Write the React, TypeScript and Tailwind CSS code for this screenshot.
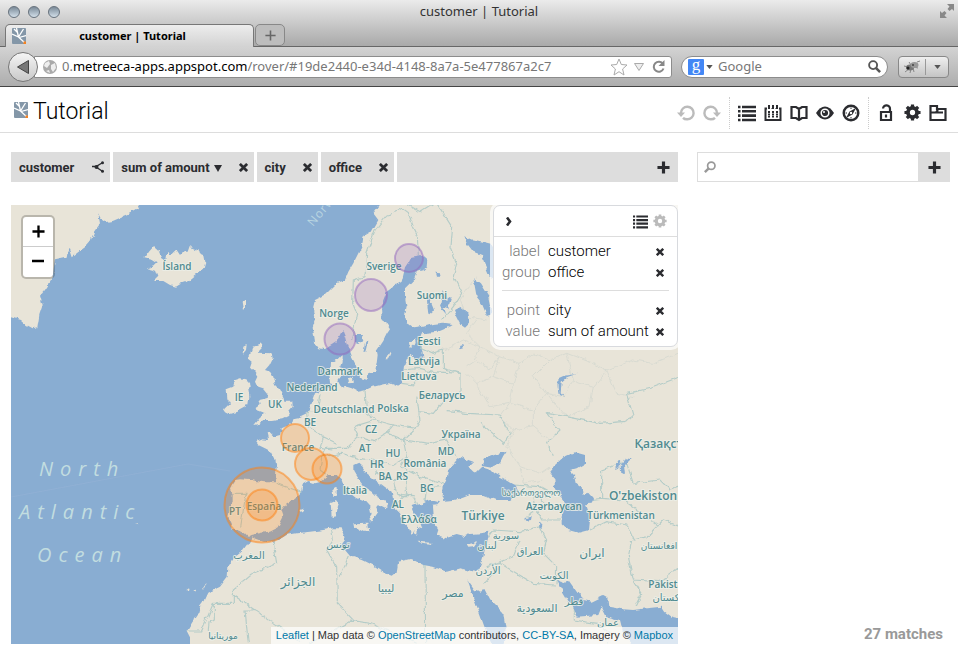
import React from "react";

type IconProps = { className?: string };

const Leaf = ({ className }: IconProps) => (
  <svg viewBox="0 0 14 16" className={className} aria-hidden="true">
    <rect width="14" height="16" rx="1" fill="#8497a8" />
    <path d="M0 6 L6.500 9 L14 16 M6.500 9 L4.500 0 M6.500 9 L11.500 1 M7 9.500 L14 7.500 M5.500 4.500 L2 1" fill="none" stroke="#fff" strokeWidth="1.300" />
    <rect x="11.500" y="13.500" width="2.500" height="2.500" fill="#f58220" />
  </svg>
);

const Undo = ({ className }: IconProps) => (
  <svg viewBox="0 0 18 18" className={className} fill="none" stroke="currentColor" strokeWidth="2.400" aria-hidden="true">
    <path d="M4 10 V9 A6.300 6.300 0 1 1 10 15.300 Q7.500 15.300 6 13.800" />
    <path d="M0 8.500 H8 L4 13 Z" fill="currentColor" stroke="none" />
  </svg>
);

const ListIcon = ({ className }: IconProps) => (
  <svg viewBox="0 0 18 18" className={className} stroke="currentColor" strokeWidth="2.600" aria-hidden="true">
    <path d="M0 3 H2.500 M4 3 H18 M0 7.300 H2.500 M4 7.300 H18 M0 11.600 H2.500 M4 11.600 H18 M0 16 H2.500 M4 16 H18" />
  </svg>
);

const CalendarIcon = ({ className }: IconProps) => (
  <svg viewBox="0 0 18 18" className={className} fill="none" stroke="currentColor" strokeWidth="2" aria-hidden="true">
    <path d="M1.500 3.500 V16 H16.500 V3.500 M5 1 V5 M9 1 V5 M13 1 V5 M0.500 4.500 H3 M15 4.500 H17.500" />
    <path d="M7 4.500 H7.500 M11 4.500 H11.500" strokeWidth="1" />
    <path d="M4 8 H14 M4 12.500 H14" strokeDasharray="2 2" />
    <path d="M4 10.300 H14" strokeDasharray="2 2" strokeWidth="1.400" />
  </svg>
);

const BookIcon = ({ className }: IconProps) => (
  <svg viewBox="0 0 18 18" className={className} fill="none" stroke="currentColor" strokeWidth="2.200" aria-hidden="true">
    <path d="M9 5 L6 3 H1.500 V14 H6 L9 16 L12 14 H16.500 V3 H12 Z M9 5 V16" />
  </svg>
);

const EyeIcon = ({ className }: IconProps) => (
  <svg viewBox="0 0 18 16" className={className} aria-hidden="true">
    <path d="M0 8 Q4 1.500 9 1.500 T18 8 Q14 14.500 9 14.500 T0 8 Z" fill="currentColor" />
    <circle cx="9" cy="8" r="3.800" fill="none" stroke="#fff" strokeWidth="1.500" />
    <circle cx="8" cy="7" r="1" fill="#fff" />
  </svg>
);

const CompassIcon = ({ className }: IconProps) => (
  <svg viewBox="0 0 18 18" className={className} aria-hidden="true">
    <circle cx="9" cy="9" r="7.300" fill="none" stroke="currentColor" strokeWidth="2.400" />
    <path d="M14 4 L10.500 10.500 L4 14 L7.500 7.500 Z" fill="currentColor" />
    <circle cx="9" cy="9" r="1.200" fill="#fff" />
    <path d="M3.500 9 H5 M13 9 H14.500 M9 3.500 V5 M9 13 V14.500" stroke="currentColor" />
  </svg>
);

const LockIcon = ({ className }: IconProps) => (
  <svg viewBox="0 0 18 18" className={className} fill="none" stroke="currentColor" strokeWidth="2.200" aria-hidden="true">
    <path d="M4 8 H14 V16 H4 Z M13 8 V5 A3.500 3.400 0 0 0 6 4.500" />
    <path d="M9 10.500 V13.500" />
  </svg>
);

const GearIcon = ({ className }: IconProps) => (
  <svg viewBox="0 0 18 18" className={className} fill="none" stroke="currentColor" aria-hidden="true">
    <circle cx="9" cy="9" r="4.800" strokeWidth="4" />
    <path d="M9 .5 V4 M9 14 V17.500 M.5 9 H4 M14 9 H17.500 M3 3 L5.500 5.500 M12.500 12.500 L15 15 M15 3 L12.500 5.500 M5.500 12.500 L3 15" strokeWidth="3.400" />
  </svg>
);

const FolderIcon = ({ className }: IconProps) => (
  <svg viewBox="0 0 18 18" className={className} fill="none" stroke="currentColor" strokeWidth="2.200" aria-hidden="true">
    <path d="M1.500 16 V2 H8 V5 H16.500 V16 Z M1.500 8.500 H7 L9 6 M7 8.500 H14" />
  </svg>
);

const CrossIcon = ({ className }: IconProps) => (
  <svg viewBox="0 0 10 10" className={className} stroke="currentColor" strokeWidth="3" aria-hidden="true">
    <path d="M1 1 L9 9 M9 1 L1 9" />
  </svg>
);

const PlusIcon = ({ className }: IconProps) => (
  <svg viewBox="0 0 14 14" className={className} stroke="currentColor" strokeWidth="3.400" aria-hidden="true">
    <path d="M7 .5 V13.500 M.5 7 H13.500" />
  </svg>
);

const ShareIcon = ({ className }: IconProps) => (
  <svg viewBox="0 0 12 12" className={className} stroke="currentColor" strokeWidth="1.400" fill="currentColor" aria-hidden="true">
    <path d="M0 5.500 H4 L10 2 M4 6 L10 10" fill="none" />
    <circle cx="4.500" cy="6" r="2" stroke="none" />
    <circle cx="10.500" cy="1.700" r="1.500" stroke="none" />
    <circle cx="10.500" cy="10.300" r="1.500" stroke="none" />
  </svg>
);

const Magnifier = ({ className }: IconProps) => (
  <svg viewBox="0 0 14 14" className={className} fill="none" stroke="currentColor" strokeWidth="2" aria-hidden="true">
    <circle cx="5.500" cy="5.500" r="4.300" />
    <path d="M8.500 8.500 L13 13" strokeWidth="2.800" />
  </svg>
);

const land = [
  "-20,600 420,600 420,615 412,628 380,645 340,662 318,666 302,655 294,640 300,670 282,695 272,722 255,742 235,756 215,772 205,742 200,770 165,778 162,800 158,835 145,855 135,870 120,887 128,915 118,945 115,965 112,985 98,988 80,978 60,960 33,952 -20,952",
  "433,775 447,755 462,738 475,750 484,772 498,780 503,752 512,768 530,750 540,765 552,752 566,752 572,735 582,750 595,743 600,760 612,765 616,785 610,805 600,815 583,828 565,843 545,850 528,860 510,855 490,843 462,843 475,830 468,812 440,805 462,797 470,790 455,780",
  "678,1237 672,1228 690,1210 682,1195 680,1168 700,1160 706,1140 722,1135 735,1138 750,1145 752,1160 745,1170 748,1190 745,1210 735,1222 710,1235 688,1242",
  "758,1040 785,1030 788,1045 775,1058 815,1060 818,1075 808,1095 795,1110 810,1115 820,1130 825,1155 840,1170 850,1190 853,1205 877,1205 878,1220 865,1235 870,1245 850,1255 815,1260 790,1260 775,1272 760,1275 780,1250 800,1240 785,1235 765,1228 782,1215 778,1200 800,1195 802,1180 790,1165 775,1160 768,1145 775,1130 765,1115 750,1100 755,1085 742,1075 750,1065 755,1050",
  "1150,600 1120,640 1135,660 1115,695 1090,710 1085,740 1075,760 1060,790 1045,815 1035,840 1010,850 990,870 975,885 945,900 940,920 940,940 945,960 938,980 942,1000 945,1030 955,1045 975,1047 995,1035 1010,1025 1027,990 1035,1010 1040,1030 1048,1050 1055,1070 1065,1090 1075,1115 1080,1135 1100,1140 1102,1120 1125,1115 1130,1090 1133,1065 1130,1050 1150,1020 1160,1000 1170,985 1160,970 1145,960 1143,920 1150,900 1160,875 1180,860 1205,845 1210,825 1215,805 1225,790 1235,770 1265,765 1282,780 1280,800 1270,810 1250,815 1240,840 1215,865 1215,890 1220,920 1215,950 1220,970 1240,985 1270,980 1300,972 1330,968 1355,972 1335,985 1310,995 1265,1000 1255,1025 1265,1040 1270,1070 1265,1085 1250,1080 1235,1065 1220,1075 1212,1095 1210,1120 1205,1145 1195,1160 1170,1150 1150,1153 1120,1160 1100,1170 1075,1175 1055,1165 1040,1160 1025,1165 1015,1145 1020,1130 1035,1110 1020,1105 1025,1090 1025,1065 1005,1085 990,1090 988,1120 990,1145 1000,1160 975,1172 960,1175 945,1180 938,1200 930,1220 920,1240 895,1252 880,1255 875,1272 855,1280 845,1285 840,1305 820,1310 808,1298 800,1300 805,1320 785,1318 768,1325 775,1335 795,1345 815,1355 825,1375 830,1400 828,1425 825,1447 790,1447 750,1440 720,1438 705,1440 695,1455 690,1470 698,1480 698,1510 690,1530 685,1550 695,1570 698,1590 715,1590 735,1600 745,1610 755,1605 785,1598 810,1595 830,1585 840,1565 850,1545 845,1530 860,1510 880,1500 898,1485 905,1455 925,1443 945,1450 965,1445 990,1425 1010,1425 1025,1440 1030,1455 1045,1475 1070,1495 1095,1505 1110,1522 1115,1545 1105,1560 1115,1570 1125,1550 1135,1535 1128,1520 1145,1518 1158,1525 1163,1515 1150,1500 1130,1490 1115,1475 1090,1460 1075,1440 1060,1415 1060,1395 1075,1388 1088,1400 1100,1420 1120,1435 1140,1450 1160,1465 1175,1475 1180,1500 1185,1525 1200,1540 1210,1565 1225,1580 1235,1605 1242,1590 1250,1605 1255,1580 1270,1585 1262,1565 1250,1550 1240,1530 1235,1515 1250,1510 1265,1515 1275,1505 1290,1500 1302,1504 1296,1520 1298,1545 1302,1570 1315,1590 1310,1605 1340,1615 1370,1605 1390,1610 1410,1602 1440,1600 1465,1595 1460,1620 1455,1645 1450,1670 1442,1695 1430,1715 1400,1710 1380,1705 1340,1715 1300,1700 1270,1695 1240,1680 1230,1677 1195,1685 1190,1715 1175,1727 1145,1715 1115,1695 1085,1680 1050,1668 1035,1650 1020,1640 1035,1620 1030,1600 1025,1585 1000,1585 970,1590 930,1595 890,1600 860,1605 820,1628 790,1625 755,1612 740,1635 725,1655 700,1675 685,1700 683,1730 660,1760 625,1778 615,1800 600,1820 595,1840 575,1870 560,1895 570,1915 570,1940 2060,1940 2060,600",
  "1060,1570 1105,1568 1108,1595 1090,1595 1062,1580",
  "992,1508 1008,1500 1015,1510 1010,1545 995,1548",
  "997,1465 1010,1458 1010,1485 1000,1492",
  "1250,1625 1295,1628 1290,1634 1255,1630",
  "1400,1632 1420,1630 1435,1624 1425,1638 1405,1640",
  "898,1530 912,1525 910,1536 900,1538",
  "1040,1135 1058,1130 1062,1148 1045,1150",
  "1230,1030 1248,1015 1250,1030 1232,1045",
  "1160,1078 1170,1055 1174,1060 1164,1082",
  "725,905 735,900 735,922 729,930",
  "730,1040 740,1035 738,1050 728,1062",
  "562,1768 570,1762 572,1768",
  "580,1772 586,1770 584,1778",
  "606,1768 616,1752 620,1750 612,1768",
  "405,1572 420,1573 418,1576",
];

const water = [
  "1390,705 1410,720 1435,725 1455,730 1475,735 1490,760 1490,840 1470,830 1455,795 1445,765 1420,755 1400,730",
  "1362,930 1380,920 1405,940 1410,965 1395,980 1380,970 1370,950",
  "1420,835 1440,850 1465,890 1475,940 1460,945 1445,910 1430,890",
  "1065,1005 1085,1005 1090,1020 1075,1032 1065,1025",
  "1096,1025 1102,1025 1096,1055 1090,1055",
  "1280,890 1292,880 1290,900 1302,930 1285,945",
  "1328,870 1340,900 1355,890 1345,925 1330,920 1335,940 1320,920",
  "1305,818 1320,820 1325,830 1308,830",
  "1380,1038 1390,1035 1392,1042 1382,1045",
  "1325,1490 1328,1460 1340,1435 1345,1410 1370,1380 1385,1368 1405,1380 1420,1385 1405,1400 1420,1415 1430,1420 1450,1400 1465,1405 1480,1420 1510,1435 1545,1455 1555,1475 1545,1490 1530,1500 1490,1500 1450,1485 1410,1485 1385,1495 1360,1500 1330,1503",
  "1445,1395 1455,1375 1480,1365 1520,1355 1510,1370 1500,1390 1475,1400",
  "1275,1510 1295,1500 1320,1507 1312,1516 1290,1518",
  "1648,1415 1665,1395 1690,1372 1725,1357 1755,1365 1755,1390 1730,1405 1710,1410 1725,1425 1730,1450 1745,1460 1748,1485 1765,1475 1782,1495 1775,1508 1755,1510 1765,1540 1770,1560 1767,1590 1735,1598 1705,1590 1685,1570 1685,1550 1695,1530 1690,1500 1675,1480 1665,1460 1663,1435",
  "1845,1410 1855,1385 1865,1382 1858,1405",
  "1862,1400 1875,1372 1892,1375 1872,1395 1875,1425 1864,1420",
  "1668,1735 1690,1750 1705,1740 1730,1775 1750,1800 1775,1805 1810,1788 1822,1795 1825,1820 1870,1828 1900,1830 1940,1825 1985,1820 1995,1835 2015,1850 2060,1860 2060,1940 1900,1940 1870,1900 1860,1860 1820,1850 1805,1820 1795,1845 1730,1850 1715,1820 1695,1785 1680,1760",
  "1402,1738 1425,1770 1440,1775 1452,1765 1470,1800 1510,1840 1517,1885 1510,1940 1480,1940 1455,1885 1435,1830 1410,1760",
  "1570,1555 1592,1550 1590,1560 1575,1562",
  "1617,1565 1630,1580 1628,1587 1618,1580",
  "1675,1135 1690,1128 1730,1122 1735,1120 1700,1132 1685,1145 1682,1180 1692,1190 1680,1185 1676,1165",
];

const borders =
  "M1160,645 L1180,640 1205,625 1225,640 1240,680 1255,710 1258,765 M1160,645 L1125,690 1100,760 1095,830 1060,840 1058,910 1070,940 1062,985 1055,1020 M1225,615 L1260,635 1300,610 M1310,610 L1330,640 1355,680 1350,740 1370,790 1360,830 1385,880 1360,920 1325,962 M1258,1040 L1300,1060 1330,1050 M1210,1110 L1260,1105 1300,1115 1380,1120 M1205,1150 L1240,1155 1260,1130 M1330,1050 L1330,1105 1380,1120 1380,1180 1340,1190 1300,1240 1255,1235 M1340,1235 L1400,1240 1500,1245 1530,1300 1510,1330 1440,1270 M1095,1170 L1100,1240 1125,1260 1060,1280 1075,1310 1040,1345 980,1345 970,1365 M1125,1260 L1180,1275 1245,1285 1260,1260 1250,1190 M1075,1310 L1120,1325 1160,1300 1180,1275 M1160,1300 L1210,1320 1240,1290 M1210,1320 L1220,1370 1180,1395 1120,1380 1075,1375 1025,1360 965,1370 960,1410 980,1425 M1210,1320 L1290,1330 1340,1320 1365,1370 M1220,1370 L1200,1400 1260,1430 1300,1440 1330,1450 M1120,1380 L1130,1420 1180,1440 1190,1480 1240,1490 1250,1510 M1180,1440 L1215,1430 1220,1480 1185,1520 M1190,1480 L1210,1490 1240,1490 M700,1480 L738,1480 730,1530 722,1580 M830,1450 L900,1475 M920,1240 L925,1280 970,1310 1010,1330 M960,1180 L950,1240 920,1240 M970,1310 L960,1345 1000,1350 M1275,1505 L1280,1465 1320,1460 M820,1628 L830,1690 760,1720 700,1770 700,1810 640,1810 M700,1785 L900,1925 M640,1810 L605,1893 560,1893 M625,1893 L627,1865 643,1860 643,1810 M760,1830 L735,1830 745,1930 M995,1590 L1000,1620 980,1650 1010,1700 1012,1810 1060,1860 930,1930 M1045,1670 L1020,1730 M1275,1695 L1277,1932 M1050,1860 L1110,1870 1250,1930 M1465,1610 L1480,1590 1560,1595 1620,1580 1640,1620 1630,1660 1670,1700 1668,1750 M1460,1700 L1540,1670 1560,1620 M1460,1700 L1500,1690 1600,1750 1665,1755 M1450,1750 L1500,1700 M1555,1480 L1600,1480 1660,1530 1690,1530 M1540,1455 L1620,1460 1665,1485 M1600,1510 L1625,1560 1680,1560 M1600,1480 L1610,1530 1580,1550 M1765,1500 L1805,1495 1805,1410 1845,1395 1880,1390 1900,1450 1980,1440 2010,1470 2040,1460 M1770,1590 L1820,1565 1880,1575 1900,1620 1940,1610 1990,1560 2040,1580 M1895,1620 L1885,1670 1900,1740 1980,1745 2040,1700 M1900,1740 L1925,1780 1905,1820 M1805,1495 L1870,1500 1940,1550 1980,1580 M1660,1370 L1640,1330 1680,1290 1640,1240 1700,1250 1800,1270 1870,1265 1900,1250 1880,1180 1950,1165 2040,1130 M1720,1820 L1720,1860 1790,1870 1830,1900 1820,1930";

const provinces =
  "M1400,1100 L1430,1080 1470,1110 1500,1070 1560,1090 1600,1060 1650,1080 1700,1060 1780,1090 M1430,960 L1400,1000 1440,1040 1420,1080 M1440,1040 L1500,1070 1480,1130 1430,1150 1400,1120 M1480,1130 L1540,1150 1560,1090 M1540,1150 L1530,1210 1470,1220 1430,1150 M1530,1210 L1600,1230 1640,1180 1600,1130 1650,1080 M1640,1180 L1690,1190 1720,1140 1700,1060 M1720,1140 L1780,1160 1820,1110 1780,1090 M1780,1160 L1770,1220 1700,1250 1640,1180 M1820,1110 L1900,1080 1960,1090 2034,1060 M1820,1110 L1850,1180 1900,1190 M1530,1210 L1500,1250 1540,1290 1600,1280 1650,1320 M1540,1290 L1520,1340 1560,1400 1620,1420 1650,1400 M1560,1400 L1570,1450 1630,1440 M1430,830 L1380,900 1400,950 1460,960 M1330,1050 L1390,1020 1440,1040 M1600,1280 L1600,1230";

type Label = [string, number, number, number?];

const labels: Label[] = [
  ["Ísland", 177, 270], ["Sverige", 384, 270], ["Suomi", 432, 299], ["Norge", 334, 317],
  ["Danmark", 340, 375], ["Nederland", 312, 391], ["IE", 239, 401], ["UK", 275, 408],
  ["Deutschland", 344, 413], ["Polska", 393, 412], ["BE", 310, 426], ["Беларусь", 442, 399],
  ["Lietuva", 419, 380], ["Latvija", 424, 365], ["Eesti", 429, 345], ["CZ", 371, 433],
  ["AT", 365, 452], ["HU", 393, 457], ["HR", 377, 468], ["BA", 385, 480], ["RS", 402, 480],
  ["MD", 446, 455], ["Україна", 461, 438], ["România", 425, 467], ["BG", 427, 492],
  ["Italia", 355, 494], ["AL", 398, 508], ["Ελλάδα", 419, 523], ["France", 298, 451],
  ["España", 264, 510], ["PT", 235, 515], ["Türkiye", 483, 520, 12], ["Қазақстан", 666, 448, 12],
  ["O'zbekiston", 643, 500, 12], ["Türkmenistan", 621, 519], ["Azərbaycan", 554, 510],
  ["Pakistan", 669, 588],
];

const scriptLabels: Label[] = [
  ["საქართველო", 531, 496, 9], ["کستان", 666, 601], ["ایران", 592, 557, 12], ["العراق", 530, 555],
  ["سورية", 506, 539], ["لبنان", 487, 549], ["الأردن", 488, 574], ["الكويت", 554, 579],
  ["قطر", 574, 605], ["السعودية", 537, 612, 11], ["عمان", 608, 626], ["مصر", 453, 597, 11],
  ["ليبيا", 386, 592, 11], ["الجزائر", 298, 586, 12], ["تونس", 338, 548], ["المغرب", 249, 559],
  ["موريتانيا", 223, 639, 9], ["افغانستان", 659, 549, 9],
];

const markers = [
  { x: 409, y: 258, r: 14, color: "#9467bd" },
  { x: 371, y: 295, r: 16, color: "#9467bd" },
  { x: 340, y: 339, r: 15.5, color: "#9467bd" },
  { x: 295, y: 438, r: 14, color: "#ff7f0e" },
  { x: 311, y: 464, r: 16, color: "#ff7f0e" },
  { x: 327, y: 469, r: 14.5, color: "#ff7f0e" },
  { x: 262, y: 505, r: 37.5, color: "#ff7f0e" },
  { x: 262, y: 505, r: 15.5, color: "#ff7f0e" },
];

const WorldMap = () => (
  <svg viewBox="11 205 667 439" preserveAspectRatio="xMinYMin slice" className="absolute inset-0 h-full w-full" role="img" aria-label="Map of Europe">
    <defs>
      <filter id="coast" filterUnits="userSpaceOnUse" x="0" y="195" width="690" height="460">
        <feTurbulence type="fractalNoise" baseFrequency="0.13" numOctaves="3" seed="4" />
        <feDisplacementMap in="SourceGraphic" scale="5" xChannelSelector="R" yChannelSelector="G" />
      </filter>
    </defs>
    <rect x="11" y="205" width="667" height="439" fill="#89add2" />
    <g filter="url(#coast)">
      <g transform="scale(.33333)">
        {land.map((p) => <polygon key={p} points={p} fill="#e8e4d8" />)}
        <path d={provinces} fill="none" stroke="#d5d8d0" strokeWidth="2.500" />
        <path d={borders} fill="none" stroke="#b4ccc8" strokeWidth="3.400" />
        {water.map((p) => <polygon key={p} points={p} fill="#89add2" />)}
      </g>
    </g>
    <path d="M11 497 L188 464 L230 471" fill="none" stroke="#93b2d5" strokeWidth=".7" />
    <g className="fill-[#c2dde0] italic font-[Open_Sans,Noto_Sans,sans-serif] text-[20px] tracking-[7px]">
      <text x="39" y="476">North</text>
      <text x="19" y="519">Atlantic</text>
      <text x="37" y="562">Ocean</text>
    </g>
    <text transform="translate(313 227) rotate(-50)" className="fill-[#b9d5e1] font-[Open_Sans,Noto_Sans,sans-serif] text-[12px] tracking-[1px]">Norwegian</text>
    <g textAnchor="middle" fill="#508a90" stroke="#edf0e9" strokeWidth="2" strokeOpacity=".8" strokeLinejoin="round" paintOrder="stroke">
      <g className="font-[Open_Sans,Noto_Sans,sans-serif] font-semibold">
        {labels.map(([t, x, y, s]) => <text key={t} x={x} y={y} fontSize={s ?? 10}>{t}</text>)}
      </g>
      <g className="font-[DejaVu_Sans,sans-serif]">
        {scriptLabels.map(([t, x, y, s]) => <text key={t} x={x} y={y} fontSize={s ?? 10}>{t}</text>)}
      </g>
    </g>
    {markers.map((m) => (
      <circle key={`${m.x}-${m.r}`} cx={m.x} cy={m.y} r={m.r} fill={m.color} fillOpacity=".22" stroke={m.color} strokeOpacity=".5" strokeWidth="2" />
    ))}
  </svg>
);

const BrowserChrome = () => (
  <header className="font-[Noto_Sans,Open_Sans,sans-serif] text-[13px] text-[#333]">
    <div className="h-[47px] border-b border-[#666] bg-gradient-to-b from-[#ebebeb] to-[#a9a9a9]">
      <div className="relative flex h-6 items-center px-2">
        <div className="flex gap-2">
          {["Close", "Minimise", "Zoom"].map((n) => (
            <button key={n} aria-label={n} className="size-3 rounded-full border border-[#66717c] bg-gradient-to-b from-[#7b8a98] to-[#d3e0ea]" />
          ))}
        </div>
        <div className="flex-1 pr-[52px] text-center">customer | Tutorial</div>
        <button aria-label="Full screen" className="absolute right-1 top-1 text-[#888]">
          <svg viewBox="0 0 14 14" className="size-[14px]" fill="currentColor" aria-hidden="true">
            <path d="M7 0 H14 V7 L12 5 L9.500 7 L7.500 5 L9.500 2.500 Z M0 7 L2 9 L4.500 7 L6.500 9 L4.500 11.500 L7 14 H0 Z" />
          </svg>
        </button>
      </div>
      <div className="flex gap-px pl-[5px]">
        <div className="flex h-[23px] w-[249px] items-center rounded-t-[5px] border border-b-0 border-[#777] bg-gradient-to-b from-[#ededed] to-[#d2d2d2] px-1.5">
          <Leaf className="h-4 w-[14px]" />
          <span className="flex-1 pr-2 text-center text-[11px] font-bold text-black">customer | Tutorial</span>
        </div>
        <button aria-label="New tab" className="flex h-[22px] w-[30px] items-center justify-center rounded-[5px] border border-[#888] bg-[#bdbdbd] text-[#666]">
          <PlusIcon className="size-[11px] [stroke-width:2]" />
        </button>
      </div>
    </div>
    <div className="flex h-10 items-center border-b border-[#444] bg-gradient-to-b from-[#d3d3d3] to-[#adadad] pl-2 pr-[9px]">
      <button aria-label="Back" className="z-10 flex size-[30px] items-center justify-center rounded-full border border-[#777] bg-gradient-to-b from-[#f5f5f5] to-[#c9c9c9]">
        <svg viewBox="0 0 12 14" className="h-[14px] w-3" aria-hidden="true"><path d="M11.500 .5 V13.500 L.5 7 Z" fill="#777" stroke="#444" /></svg>
      </button>
      <div className="-ml-1 flex h-[22px] flex-1 items-center rounded-r-[3px] border border-[#8c8c8c] bg-white pl-2 pr-1.5 text-[#777]">
        <svg viewBox="0 0 14 14" className="size-[14px]" aria-hidden="true">
          <circle cx="7" cy="7" r="7" fill="#aaa" />
          <path d="M2 3 L6 1 L7 4 L4 8 L1 6 Z M8 5 L12 3 L13 8 L10 12 L8 9 Z M3 11 L6 10 L7 13 Z" fill="#eee" />
        </svg>
        <div className="ml-[5px] mt-px flex-1 whitespace-nowrap">0.<span className="text-black">metreeca-apps.appspot.com</span>/rover/#19de2440-e34d-4148-8a7a-5e477867a2c7</div>
        <svg viewBox="0 0 18 18" className="size-[18px]" fill="none" stroke="#aaa" aria-hidden="true"><path d="M9 1 L11.300 6.500 L17 7 L12.600 11 L14 17 L9 13.700 L4 17 L5.400 11 L1 7 L6.700 6.500 Z" /></svg>
        <svg viewBox="0 0 10 8" className="ml-1.5 h-2 w-[10px]" fill="#eee" stroke="#aaa" aria-hidden="true"><path d="M.5 .5 H9.500 L5 7.500 Z" /></svg>
        <svg viewBox="0 0 13 13" className="ml-2 size-[13px]" fill="none" stroke="#888" strokeWidth="2" aria-hidden="true"><path d="M11 4 A5 5 0 1 0 11.500 8.500" /><path d="M12.500 0 V6 H6.500 Z" fill="#888" stroke="none" /></svg>
      </div>
      <label className="ml-[9px] flex h-[22px] w-[207px] items-center rounded-full border border-[#8c8c8c] bg-white pl-1.5 pr-1.5">
        <span className="flex size-4 items-center justify-center rounded-[1px] bg-[#4387f5] pb-1 font-[Liberation_Serif,serif] text-[17px] leading-none text-white">g</span>
        <svg viewBox="0 0 8 5" className="ml-0.5 h-1 w-[7px]" fill="#555" aria-hidden="true"><path d="M0 0 H8 L4 5 Z" /></svg>
        <input aria-label="Search" placeholder="Google" className="ml-[5px] mt-px min-w-0 flex-1 bg-transparent outline-none placeholder:text-[#777]" />
        <Magnifier className="size-[13px] text-[#555]" />
      </label>
      <button aria-label="Firebug" className="ml-[10px] flex h-[22px] w-[51px] items-center rounded-[4px] border border-[#888] bg-gradient-to-b from-[#efefef] to-[#c4c4c4]">
        <svg viewBox="0 0 18 14" className="ml-1 h-[14px] w-[18px]" aria-hidden="true">
          <path d="M1 6 L5 7 M2 12 L6 9 M7 13 L8 9 M11 12 L10 8 M15 8 L11 7 M6 2 L8 5 M14 2 L17 1" stroke="#888" />
          <ellipse cx="7" cy="7.500" rx="4" ry="3" fill="#777" /><ellipse cx="11.500" cy="5" rx="4" ry="3" fill="#999" /><circle cx="5" cy="8" r="1.500" fill="#222" /><circle cx="10" cy="5" r="1" fill="#444" />
        </svg>
        <span className="ml-1 h-4 w-px bg-[#999]" />
        <svg viewBox="0 0 8 5" className="ml-2 h-1 w-[7px]" fill="#555" aria-hidden="true"><path d="M0 0 H8 L4 5 Z" /></svg>
      </button>
    </div>
  </header>
);

const Tool = ({ name, children }: { name: string; children: React.ReactNode }) => (
  <button aria-label={name} className="flex w-[26px] items-center justify-center">{children}</button>
);

const Toolbar = () => (
  <div className="flex h-[46px] items-center border-b border-[#ddd] pl-[14px] pr-[7px]">
    <Leaf className="h-4 w-[14px]" />
    <h1 className="ml-[5px] mt-1 flex-1 text-[23px] font-light leading-8 text-black">Tutorial</h1>
    <nav className="mt-1.5 flex h-8 items-stretch text-[#2b2c30]">
      <div className="flex text-[#bbb]">
        <Tool name="Undo"><Undo className="size-[18px]" /></Tool>
        <Tool name="Redo"><Undo className="size-[18px] -scale-x-100" /></Tool>
      </div>
      <div className="ml-1 flex border-l border-dotted border-[#ccc] pl-1 pr-1">
        <Tool name="List"><ListIcon className="size-[18px]" /></Tool>
        <Tool name="Calendar"><CalendarIcon className="size-[18px]" /></Tool>
        <Tool name="Book"><BookIcon className="size-[18px]" /></Tool>
        <Tool name="View"><EyeIcon className="h-4 w-[18px]" /></Tool>
        <Tool name="Explore"><CompassIcon className="size-[18px]" /></Tool>
      </div>
      <div className="flex border-l border-dotted border-[#ccc] pl-1">
        <Tool name="Unlock"><LockIcon className="size-[18px]" /></Tool>
        <Tool name="Settings"><GearIcon className="size-[17px]" /></Tool>
        <Tool name="Folder"><FolderIcon className="size-[18px]" /></Tool>
      </div>
    </nav>
  </div>
);

const Chip = ({ label, arrow }: { label: string; arrow?: boolean }) => (
  <div className="flex items-center bg-[#ddd] pl-2 pr-1.5">
    <span className="mt-0.5">{label}</span>
    {arrow && <svg viewBox="0 0 8 7" className="ml-1 mt-0.5 h-[7px] w-2" fill="currentColor" aria-hidden="true"><path d="M0 0 H8 L4 7 Z" /></svg>}
    <button aria-label={`Remove ${label}`} className="ml-[17px]"><CrossIcon className="size-[9px]" /></button>
  </div>
);

const Row = ({ name, value }: { name: string; value: string }) => (
  <div className="flex h-[21px] items-center">
    <dt className="w-[38px] text-right text-[#777]">{name}</dt>
    <dd className="ml-2 flex flex-1 items-center whitespace-nowrap text-black">
      <span className="flex-1">{value}</span>
      <button aria-label={`Clear ${name}`} className="mr-[5px] text-[#2b2c30]"><CrossIcon className="size-2" /></button>
    </dd>
  </div>
);

const MapView = () => (
  <div className="relative min-h-[360px] flex-1 overflow-hidden">
    <WorldMap />
    <div className="absolute left-[10px] top-[10px] flex w-[34px] flex-col overflow-hidden rounded-[5px] border-2 border-black/20 bg-white bg-clip-padding text-black">
      <button aria-label="Zoom in" className="flex h-[30px] items-center justify-center border-b border-[#ccc]"><PlusIcon className="size-[13px] [stroke-width:2.5]" /></button>
      <button aria-label="Zoom out" className="flex h-[30px] items-center justify-center">
        <svg viewBox="0 0 12 12" className="size-3" aria-hidden="true"><path d="M0 5 H12" stroke="currentColor" strokeWidth="2.500" /></svg>
      </button>
    </div>
    <section aria-label="Map settings" className="absolute right-0 top-0 w-[185px] rounded-[7px] border border-[#d8dade] bg-white shadow-[0_0_0_3px_rgba(255,255,255,0.7)]">
      <div className="flex h-[31px] items-center border-b border-[#ddd] pl-3 pr-[10px]">
        <button aria-label="Collapse" className="text-[#2b2c30]">
          <svg viewBox="0 0 7 9" className="h-[9px] w-[7px]" fill="none" stroke="currentColor" strokeWidth="2.600" aria-hidden="true"><path d="M1 .5 L4 4.500 L1 8.500" /></svg>
        </button>
        <button aria-label="Legend" className="ml-auto text-[#2b2c30]"><ListIcon className="size-[15px]" /></button>
        <button aria-label="Options" className="ml-[5px] text-[#bbb]"><GearIcon className="size-[14px]" /></button>
      </div>
      <dl className="px-2 text-[15px] font-light">
        <div className="border-b border-[#ddd] pb-[7px] pt-[4px]">
          <Row name="label" value="customer" />
          <Row name="group" value="office" />
        </div>
        <div className="pb-[4px] pt-[9px]">
          <Row name="point" value="city" />
          <Row name="value" value="sum of amount" />
        </div>
      </dl>
    </section>
    <div className="absolute bottom-0 right-0 whitespace-nowrap bg-white/70 px-[5px] font-[Liberation_Sans,Arial,sans-serif] text-[11px] leading-[17px] text-[#333]">
      <a href="#leaflet" className="text-[#0078a8]">Leaflet</a> | Map data © <a href="#osm" className="text-[#0078a8]">OpenStreetMap</a> contributors, <a href="#license" className="text-[#0078a8]">CC-BY-SA</a>, Imagery © <a href="#mapbox" className="text-[#0078a8]">Mapbox</a>
    </div>
  </div>
);

export default function App() {
  return (
    <div className="flex min-h-screen flex-col bg-white font-[Roboto,sans-serif]">
      <BrowserChrome />
      <Toolbar />
      <main className="flex flex-1 gap-[19px] pb-[15px] pl-[11px] pr-2 pt-[19px]">
        <div className="flex min-w-0 flex-1 flex-col gap-[23px]">
          <div className="flex h-[30px] gap-[3px] text-[13px] font-bold text-[#2b2c30]">
            <div className="flex items-center bg-[#ddd] pl-2 pr-1.5">
              <span className="mt-0.5">customer</span>
              <button aria-label="Share" className="ml-[18px]"><ShareIcon className="size-3" /></button>
            </div>
            <Chip label="sum of amount" arrow />
            <Chip label="city" />
            <Chip label="office" />
            <div className="flex flex-1 items-center justify-end bg-[#ddd] pr-2">
              <button aria-label="Add field"><PlusIcon className="size-[13px]" /></button>
            </div>
          </div>
          <MapView />
        </div>
        <aside className="flex w-[253px] flex-col justify-between">
          <div className="flex h-[30px]">
            <label className="flex flex-1 items-center border border-r-0 border-[#ddd] px-1.5">
              <Magnifier className="size-3 -scale-x-100 text-[#999]" />
              <input aria-label="Filter" className="ml-1 min-w-0 flex-1 text-sm outline-none" />
            </label>
            <button aria-label="Add filter" className="flex w-8 items-center justify-center bg-[#ddd] text-[#2b2c30]"><PlusIcon className="size-[13px]" /></button>
          </div>
          <p className="pr-[7px] text-right text-[15px] font-bold leading-5 text-[#999]">27 matches</p>
        </aside>
      </main>
    </div>
  );
}
